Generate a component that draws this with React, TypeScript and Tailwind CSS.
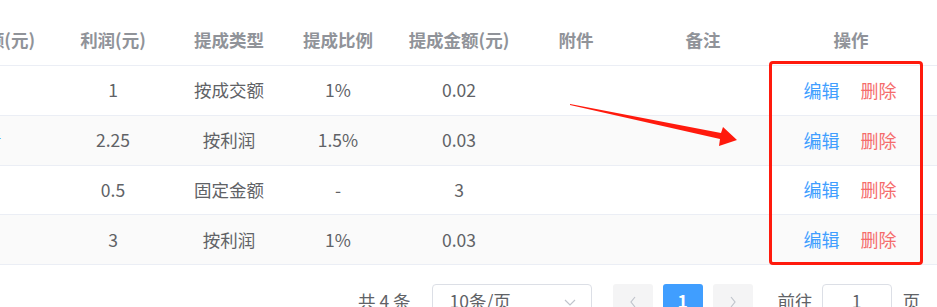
import React from "react";

const headers = ["交易金额(元)", "利润(元)", "提成类型", "提成比例", "提成金额(元)", "附件", "备注", "操作"];

const rows = [
  ["", "1", "按成交额", "1%", "0.02"],
  ["", "2.25", "按利润", "1.5%", "0.03"],
  ["", "0.5", "固定金额", "-", "3"],
  ["", "3", "按利润", "1%", "0.03"],
];

const font = { fontFamily: '"Noto Sans CJK SC", "Noto Sans", sans-serif' };

export default function App() {
  return (
    <div className="relative w-[937px] h-[307px] overflow-hidden bg-white" style={font}>
      <div className="pt-[16px]">
        {/* header */}
        <div className="flex h-[50px] border-b border-[#ebeef5] text-[17.5px] font-bold text-[#909399]">
          <div className="w-[58px] flex items-center justify-end pr-[23px] overflow-hidden whitespace-nowrap">
            <span className="shrink-0">{headers[0]}</span>
          </div>
          <div className="w-[110px] flex items-center justify-center whitespace-nowrap">{headers[1]}</div>
          <div className="w-[122px] flex items-center justify-center whitespace-nowrap">{headers[2]}</div>
          <div className="w-[96px] flex items-center justify-center whitespace-nowrap">{headers[3]}</div>
          <div className="w-[146px] flex items-center justify-center whitespace-nowrap">{headers[4]}</div>
          <div className="w-[88px] flex items-center justify-center whitespace-nowrap">{headers[5]}</div>
          <div className="w-[166px] flex items-center justify-center whitespace-nowrap">{headers[6]}</div>
          <div className="w-[130px] flex items-center justify-center whitespace-nowrap">{headers[7]}</div>
        </div>
        {rows.map((r, i) => (
          <div
            key={i}
            className={`flex h-[49.75px] border-b border-[#ebeef5] text-[17.5px] text-[#606266] ${i % 2 === 1 ? "bg-[#fafafa]" : "bg-white"}`}
          >
            <div className="w-[58px] flex items-center justify-end overflow-hidden whitespace-nowrap">
              {i === 1 ? <span className="shrink-0 mr-[56.5px] text-[#409eff]">查看</span> : null}
            </div>
            <div className="w-[110px] flex items-center justify-center">{r[1]}</div>
            <div className="w-[122px] flex items-center justify-center">{r[2]}</div>
            <div className="w-[96px] flex items-center justify-center">{r[3]}</div>
            <div className="w-[146px] flex items-center justify-center">{r[4]}</div>
            <div className="w-[88px]" />
            <div className="w-[166px]" />
            <div className="w-[130px] flex items-center justify-center gap-[21px] pr-[2px] text-[18px]">
              <span className="text-[#409eff]">编辑</span>
              <span className="text-[#f56c6c]">删除</span>
            </div>
          </div>
        ))}
      </div>

      {/* pagination */}
      <div className="flex items-center h-[35px] mt-[19px] pl-[358px] text-[17.5px] text-[#606266]">
        <span className="whitespace-nowrap">共 4 条</span>
        <div className="ml-[21px] w-[160px] h-[35px] border border-[#dcdfe6] rounded-[4px] flex items-center justify-between pl-[17px] pr-[14px]">
          <span>10条/页</span>
          <svg width="14" height="14" viewBox="0 0 14 14" fill="none">
            <path d="M2 5 L7 10 L12 5" stroke="#c0c4cc" strokeWidth="1.2" />
          </svg>
        </div>
        <div className="ml-[21px] w-[40px] h-[35px] rounded-[3px] bg-[#f4f4f5] flex items-center justify-center">
          <svg width="10" height="14" viewBox="0 0 10 14" fill="none">
            <path d="M7 2 L3 7 L7 12" stroke="#c0c4cc" strokeWidth="1.2" />
          </svg>
        </div>
        <div className="ml-[10px] w-[40px] h-[35px] rounded-[3px] bg-[#409eff] text-white font-bold flex items-center justify-center">1</div>
        <div className="ml-[10px] w-[40px] h-[35px] rounded-[3px] bg-[#f4f4f5] flex items-center justify-center">
          <svg width="10" height="14" viewBox="0 0 10 14" fill="none">
            <path d="M3 2 L7 7 L3 12" stroke="#c0c4cc" strokeWidth="1.2" />
          </svg>
        </div>
        <span className="ml-[25px] whitespace-nowrap">前往</span>
        <div className="ml-[9px] w-[70px] h-[35px] border border-[#dcdfe6] rounded-[4px] flex items-center justify-center">1</div>
        <span className="ml-[11px]">页</span>
      </div>

      {/* annotation: red box */}
      <div className="absolute left-[769px] top-[61px] w-[154px] h-[204px] border-[3px] border-[#ff1a0d] rounded-[4px]" />
      {/* annotation: arrow */}
      <svg className="absolute left-0 top-0" width="937" height="307" viewBox="0 0 937 307">
        <polygon points="570,104 721,133 723,127 737,140 719,146 720,139 570,105" fill="#ff1a0d" />
      </svg>
    </div>
  );
}
